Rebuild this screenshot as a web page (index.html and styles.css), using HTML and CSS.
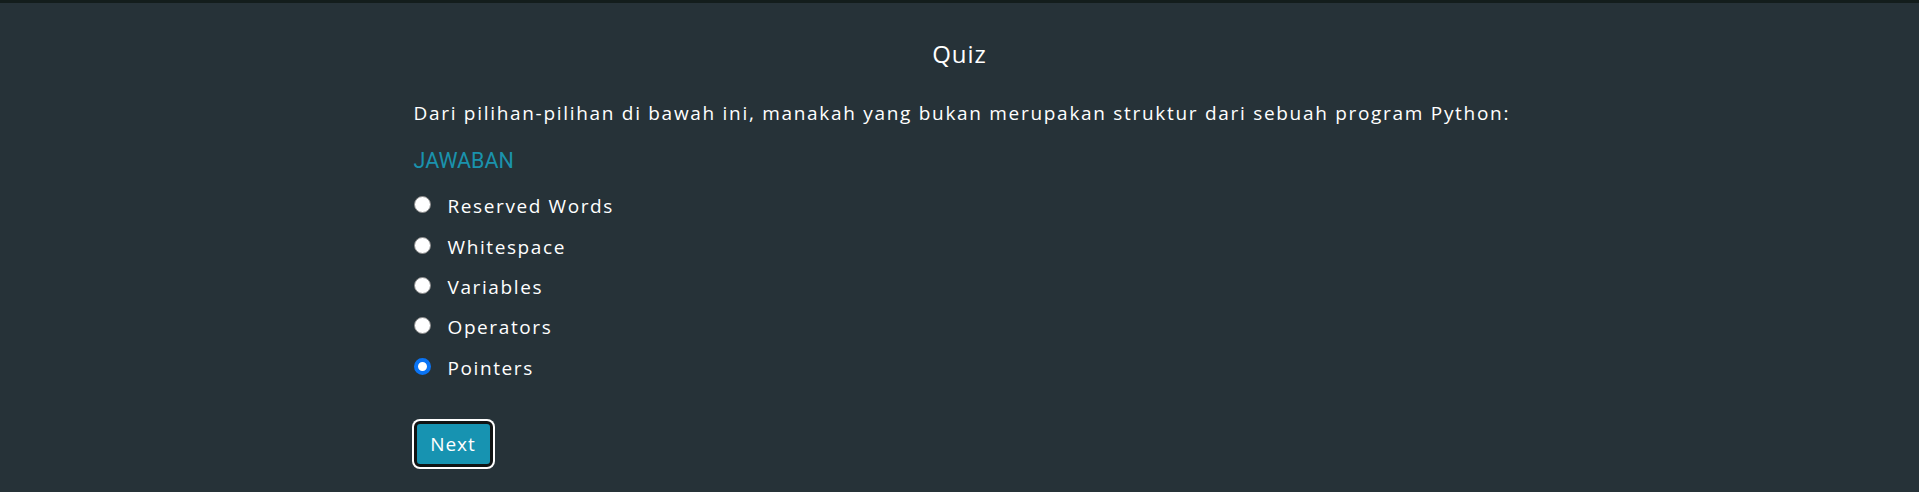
FILE: index.html
```html
<!DOCTYPE html>
<html lang="id">
<head>
<meta charset="utf-8">
<title>Quiz</title>
<link rel="stylesheet" href="styles.css">
</head>
<body>
<div class="topbar"></div>
<main class="quiz">
  <h1 class="quiz-title">Quiz</h1>
  <p class="question">Dari pilihan-pilihan di bawah ini, manakah yang bukan merupakan struktur dari sebuah program Python:</p>
  <div class="answer-label">JAWABAN</div>
  <ul class="options">
    <li class="option"><span class="radio"></span><span class="option-text">Reserved Words</span></li>
    <li class="option"><span class="radio"></span><span class="option-text">Whitespace</span></li>
    <li class="option"><span class="radio"></span><span class="option-text">Variables</span></li>
    <li class="option"><span class="radio"></span><span class="option-text">Operators</span></li>
    <li class="option"><span class="radio checked"></span><span class="option-text">Pointers</span></li>
  </ul>
  <button class="next-btn" type="button">Next</button>
</main>
</body>
</html>
```
FILE: styles.css
```css
html, body {
  margin: 0;
  padding: 0;
}
body {
  background: #263238;
  color: #ffffff;
  font-family: "Open Sans", "DejaVu Sans", sans-serif;
  height: 492px;
  overflow: hidden;
}
.topbar {
  height: 3px;
  background: #131d1c;
}
.quiz {
  width: 1092px;
  margin: 0 auto;
  padding-top: 34px;
}
.quiz-title {
  margin: 0;
  text-align: center;
  font-size: 24px;
  font-weight: 500;
  letter-spacing: 1px;
  line-height: 34px;
}
.question {
  margin: 29px 0 0;
  font-size: 19px;
  letter-spacing: 1.7px;
  line-height: 26px;
  white-space: nowrap;
}
.answer-label {
  margin-top: 22px;
  font-family: Roboto, "Liberation Sans", sans-serif;
  font-size: 21.5px;
  line-height: 26px;
  color: #1a92ad;
}
.options {
  list-style: none;
  margin: 12px 0 0;
  padding: 0;
}
.option {
  display: flex;
  align-items: center;
  height: 40.4px;
  font-size: 19px;
  letter-spacing: 1.6px;
}
.radio {
  width: 15px;
  height: 15px;
  border: 1px solid #8a8a8a;
  border-radius: 50%;
  background: #ffffff;
  margin: -3px 17px 0 0;
  flex: none;
}
.radio.checked {
  width: 9px;
  height: 9px;
  border: 4px solid #0a74f5;
}
.next-btn {
  margin-top: 33px;
  width: 79px;
  height: 46px;
  border: 3px solid #111414;
  border-radius: 6px;
  box-shadow: 0 0 0 2px #ffffff;
  background: #1793b1;
  color: #ffffff;
  font-family: "Open Sans", "DejaVu Sans", sans-serif;
  font-size: 19px;
  letter-spacing: 1px;
  padding: 0;
  cursor: pointer;
}
```
